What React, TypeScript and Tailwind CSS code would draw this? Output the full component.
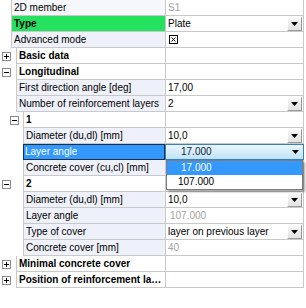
import type { ReactNode } from 'react'

function Expander({ open }: { open: boolean }) {
  return (
    <svg width="9" height="9" viewBox="0 0 9 9" className="block shrink-0">
      <rect x="0.5" y="0.5" width="8" height="8" fill="#fff" stroke="#8a8a8a" />
      <path d="M2 4.5h5" stroke="#000" />
      {!open && <path d="M4.5 2v5" stroke="#000" />}
    </svg>
  )
}

function Arrow() {
  return (
    <svg width="7" height="4" viewBox="0 0 7 4" className="block">
      <path d="M0 0h7L3.5 4z" fill="#000" />
    </svg>
  )
}

function Combo({ text }: { text: string }) {
  return (
    <div className="flex h-full w-full items-center">
      <span className="pl-[2px]">{text}</span>
      <span className="ml-auto mr-[1px] flex h-[14px] w-[15px] items-center justify-center border border-t-white border-l-white border-r-[#9a9a9a] border-b-[#9a9a9a] bg-gradient-to-b from-[#f7f7f7] to-[#e2e2e2]">
        <Arrow />
      </span>
    </div>
  )
}

function CheckBox() {
  return (
    <svg width="9" height="9" viewBox="0 0 9 9" className="ml-[3px] block">
      <rect x="0.5" y="0.5" width="8" height="8" fill="#fff" stroke="#000" />
      <path d="M2.5 2.5l4 4M6.5 2.5l-4 4" stroke="#000" />
    </svg>
  )
}

type RowProps = {
  gutter: string
  label: string
  header?: boolean
  expander?: 'open' | 'closed'
  expPad?: string
  labelBg?: string
  children?: ReactNode
}

function Row({ gutter, label, header, expander, expPad = 'pl-[2px]', labelBg = 'bg-white', children }: RowProps) {
  return (
    <div className="flex h-4">
      <div className={`flex shrink-0 items-center ${gutter} ${expPad}`}>
        {expander && <Expander open={expander === 'open'} />}
      </div>
      <div className={`flex min-w-0 flex-1 items-center border-b border-l border-[#c9c9c9] pl-[2px] ${labelBg}`}>
        <span className={`truncate ${header ? 'font-bold' : ''}`}>{label}</span>
      </div>
      <div className="flex w-[139px] shrink-0 items-center border-x border-b border-[#c9c9c9] bg-white">
        {children}
      </div>
    </div>
  )
}

const item = 'bg-[#eef1f9]'
const gray = 'pl-[2px] text-[#a3a3a3]'

export default function App() {
  return (
    <div className="h-[308px] w-[306px] bg-white font-['Liberation_Sans',Arial,sans-serif] text-[10px] leading-none text-black">
      <div className="relative w-[304px]">
        <Row gutter="w-[11px]" label="2D member" labelBg="bg-[#f6f7fa]">
          <span className={gray}>S1</span>
        </Row>
        <Row gutter="w-[11px]" label="Type" header labelBg="bg-[#24e160]">
          <Combo text="Plate" />
        </Row>
        <Row gutter="w-[11px]" label="Advanced mode" labelBg={item}>
          <CheckBox />
        </Row>
        <Row gutter="w-[16px]" label="Basic data" header expander="closed" />
        <Row gutter="w-[16px]" label="Longitudinal" header expander="open" />
        <Row gutter="w-[16px]" label="First direction angle [deg]" labelBg={item}>
          <span className="pl-[2px]">17,00</span>
        </Row>
        <Row gutter="w-[16px]" label="Number of reinforcement layers" labelBg={item}>
          <Combo text="2" />
        </Row>
        <Row gutter="w-[23px]" label="1" header expander="open" expPad="pl-[10px]" />
        <Row gutter="w-[23px]" label="Diameter (du,dl) [mm]" labelBg={item}>
          <Combo text="10,0" />
        </Row>

        {/* selected row */}
        <div className="flex h-4">
          <div className="w-[23px] shrink-0" />
          <div className="flex min-w-0 flex-1 items-center border border-[#1d2f45] bg-[#3399ff] pl-[1px] text-white">
            <span className="truncate">Layer angle</span>
          </div>
          <div className="flex w-[139px] shrink-0 items-center border border-[#3c7fb1] bg-gradient-to-b from-[#eaf6fd] to-[#bfe2f6]">
            <span className="pl-[15px] text-[#10243a]">17.000</span>
            <span className="ml-auto mr-[4px]">
              <Arrow />
            </span>
          </div>
        </div>

        <Row gutter="w-[23px]" label="Concrete cover (cu,cl) [mm]" labelBg={item} />
        <Row gutter="w-[23px]" label="2" header expander="open" expPad="pl-[2px]" />
        <Row gutter="w-[23px]" label="Diameter (du,dl) [mm]" labelBg={item}>
          <Combo text="10,0" />
        </Row>
        <Row gutter="w-[23px]" label="Layer angle" labelBg={item}>
          <span className="pl-[4px] text-[#a3a3a3]">107.000</span>
        </Row>
        <Row gutter="w-[23px]" label="Type of cover" labelBg={item}>
          <Combo text="layer on previous layer" />
        </Row>
        <Row gutter="w-[23px]" label="Concrete cover [mm]" labelBg={item}>
          <span className={gray}>40</span>
        </Row>
        <Row gutter="w-[16px]" label="Minimal concrete cover" header expander="closed" />
        <Row gutter="w-[16px]" label="Position of reinforcement layers" header expander="closed" />

        {/* open dropdown list */}
        <div className="absolute left-[166px] top-[160px] w-[137px] border border-[#7d7d7d] bg-white shadow-[2px_2px_2px_rgba(0,0,0,0.35)]">
          <div className="flex h-[14px] items-center bg-[#3399ff] pl-[14px] text-white">17.000</div>
          <div className="flex h-[14px] items-center pl-[11px]">107.000</div>
        </div>
      </div>
    </div>
  )
}
